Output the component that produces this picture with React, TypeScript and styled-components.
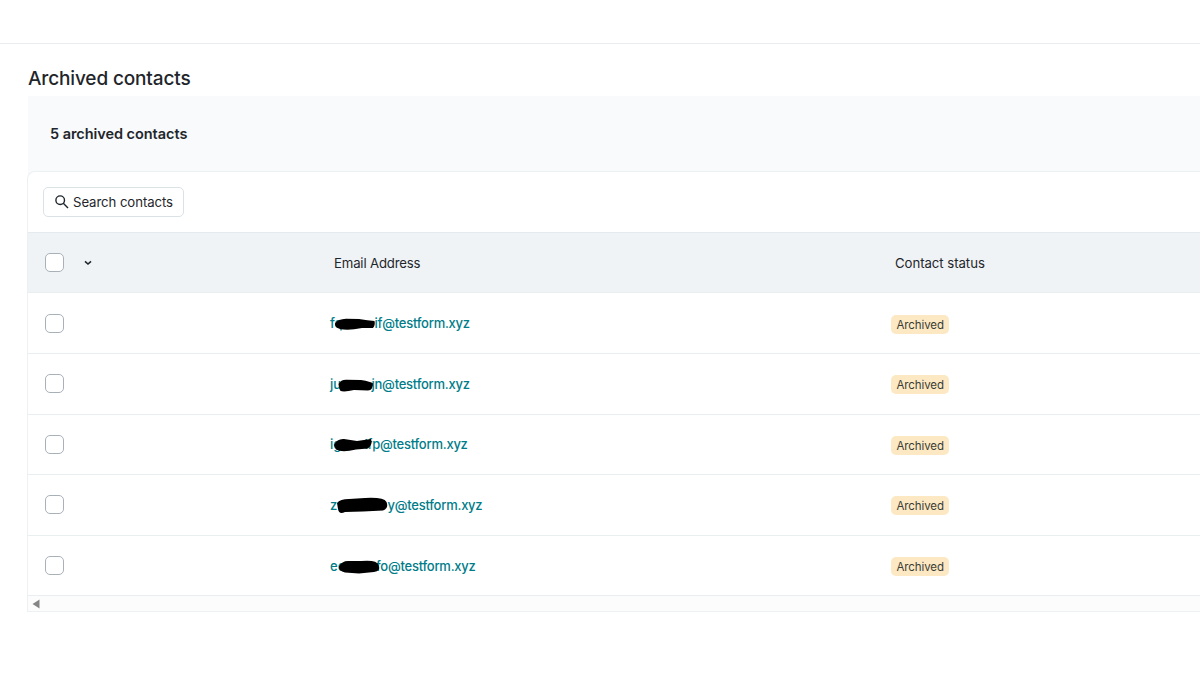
import React from "react";
import styled, { createGlobalStyle } from "styled-components";

const GlobalStyle = createGlobalStyle`
  * { box-sizing: border-box; }
  body { margin: 0; background: #fff; color: #1f262b; overflow: hidden;
    font-family: Inter, "Liberation Sans", sans-serif; font-size: 13.2px; }
`;

const Page = styled.div`
  width: 1200px;
  height: 675px;
  overflow: hidden;
`;
const TopBar = styled.header`
  height: 44px;
  border-bottom: 1px solid #ebedee;
`;
const Main = styled.main`
  padding-left: 28px;
`;
const Title = styled.h1`
  margin: 0;
  height: 52px;
  padding-top: 20px;
  font-size: 19px;
  line-height: 29px;
  font-weight: 550;
  letter-spacing: -0.14px;
`;
const Summary = styled.section`
  height: 75px;
  padding: 0 22px;
  display: flex;
  align-items: center;
  background: #f8fafc;
`;
const SummaryText = styled.h2`
  margin: 0;
  font-size: 14.5px;
  font-weight: 600;
  letter-spacing: -0.05px;
`;
const PanelBacking = styled.div`
  background: linear-gradient(#f8fafc 8px, #fff 8px);
`;
const Panel = styled.section`
  margin-left: -1px;
  background: #fff;
  border: solid #ecf1f4;
  border-width: 1px 0 1px 1px;
  border-top-left-radius: 8px;
`;
const Toolbar = styled.div`
  height: 60px;
  padding: 15px;
`;
const SearchButton = styled.button`
  display: flex;
  align-items: center;
  gap: 4px;
  width: 141px;
  height: 30px;
  padding: 0 0 0 11px;
  background: #fff;
  border: 1px solid #dbe2e6;
  border-radius: 5px;
  color: #1f262b;
  font: inherit;
  letter-spacing: -0.08px;
  white-space: nowrap;
`;
const Row = styled.div<{ $head?: boolean }>`
  display: grid;
  grid-template-columns: 302px 561px 1fr;
  align-items: center;
  height: ${(p) => (p.$head ? "61.4px" : "60.6px")};
  background: ${(p) => (p.$head ? "#eff3f6" : "#fff")};
  border-bottom: 1px solid #e9eef1;
  ${(p) => p.$head && "border-top: 1px solid #e4eaee;"}
`;
const SelectCell = styled.div`
  display: flex;
  align-items: center;
  gap: 20px;
  padding-left: 17px;
`;
const Checkbox = styled.span`
  width: 19px;
  height: 19px;
  background: #fff;
  border: 1px solid #a9b1b8;
  border-radius: 5px;
`;
const HeadLabel = styled.span<{ $spacing: number }>`
  padding-left: 4px;
  letter-spacing: ${(p) => p.$spacing}px;
`;
const Email = styled.a`
  position: relative;
  top: 0.6px;
  display: flex;
  color: #007c89;
  font-size: 13px;
  font-weight: 550;
  line-height: 19px;
`;
const Local = styled.span<{ $width: number }>`
  width: ${(p) => p.$width}px;
  white-space: nowrap;
`;
const Domain = styled.span`
  letter-spacing: -0.25px;
`;
const Scribble = styled.svg`
  position: absolute;
  left: 0;
  top: 0;
`;
const Badge = styled.span`
  justify-self: start;
  position: relative;
  top: 1px;
  height: 19px;
  padding: 0 5.5px;
  border-radius: 5px;
  background: #fde8c4;
  color: #3a3d35;
  font-size: 11.5px;
  line-height: 20px;
  letter-spacing: -0.1px;
`;
const ScrollTrack = styled.div`
  height: 15px;
  padding: 1px 0 0 4px;
  display: flex;
  align-items: center;
  background: #fcfcfc;
`;

const contacts = [
  { start: "fq", end: "if", width: 44.5, mark: "M5 9.5 Q8 5 16 4.7 L29 4.9 Q38 6.5 44.5 7 Q45.5 11 43 14 L32 14 Q18 17 10 15 Q4.5 13 5 9.5Z" },
  { start: "ju", end: "jn", width: 41.5, mark: "M8.5 9 Q11 4.2 17 4.7 L31 5 Q41 6.5 43 8.5 Q43 15 38 15.5 L24 15 Q13 17.5 10 15.5Z" },
  { start: "ig", end: "lfp", width: 34.5, mark: "M4 10 Q7 3.5 14 4 L27 6 L41 4 Q43 9.5 38 13.5 L26 14.5 Q12 18 6 14.5Z" },
  { start: "z", end: "y", width: 57.5, mark: "M7 7 Q10 3 19 3 L35 2 Q54 1 56.5 6 Q59 12 53 14.5 L33 15.5 L15 16 Q9 19 8 13Z" },
  { start: "ec", end: "fo", width: 46, mark: "M9 9.5 Q12 3.5 19 4 L31 4 Q47 2.5 48.5 8 Q51 14 44 15 L29 16.5 L15 15.5 Q8.5 14 9 9.5Z" },
];

export default function App() {
  return (
    <Page>
      <GlobalStyle />
      <TopBar />
      <Main>
        <Title>Archived contacts</Title>
        <Summary><SummaryText>5 archived contacts</SummaryText></Summary>
        <PanelBacking>
          <Panel>
            <Toolbar>
              <SearchButton>
                <svg width="14" height="14" viewBox="0 0 14 14" fill="none" stroke="#1f262b" strokeWidth="1.4">
                  <circle cx="5.2" cy="5.2" r="4.3" />
                  <path d="M8.3 8.3 L13 13" />
                </svg>
                Search contacts
              </SearchButton>
            </Toolbar>
            <Row $head>
              <SelectCell>
                <Checkbox />
                <svg width="8" height="6" viewBox="0 0 8 6" fill="none" stroke="#1f262b" strokeWidth="1.6">
                  <path d="M1 1.4 L4 4 L7 1.4" />
                </svg>
              </SelectCell>
              <HeadLabel $spacing={-0.17}>Email Address</HeadLabel>
              <HeadLabel $spacing={-0.05}>Contact status</HeadLabel>
            </Row>
            {contacts.map((c) => (
              <Row key={c.start}>
                <SelectCell><Checkbox /></SelectCell>
                <Email>
                  <Local $width={c.width}>{c.start}</Local>
                  <Domain>{c.end}@testform.xyz</Domain>
                  <Scribble width="60" height="20"><path d={c.mark} fill="#000" /></Scribble>
                </Email>
                <Badge>Archived</Badge>
              </Row>
            ))}
            <ScrollTrack>
              <svg width="8" height="10" viewBox="0 0 8 10"><path d="M0.5 5 L7.5 0.5 V9.5Z" fill="#858585" /></svg>
            </ScrollTrack>
          </Panel>
        </PanelBacking>
      </Main>
    </Page>
  );
}
